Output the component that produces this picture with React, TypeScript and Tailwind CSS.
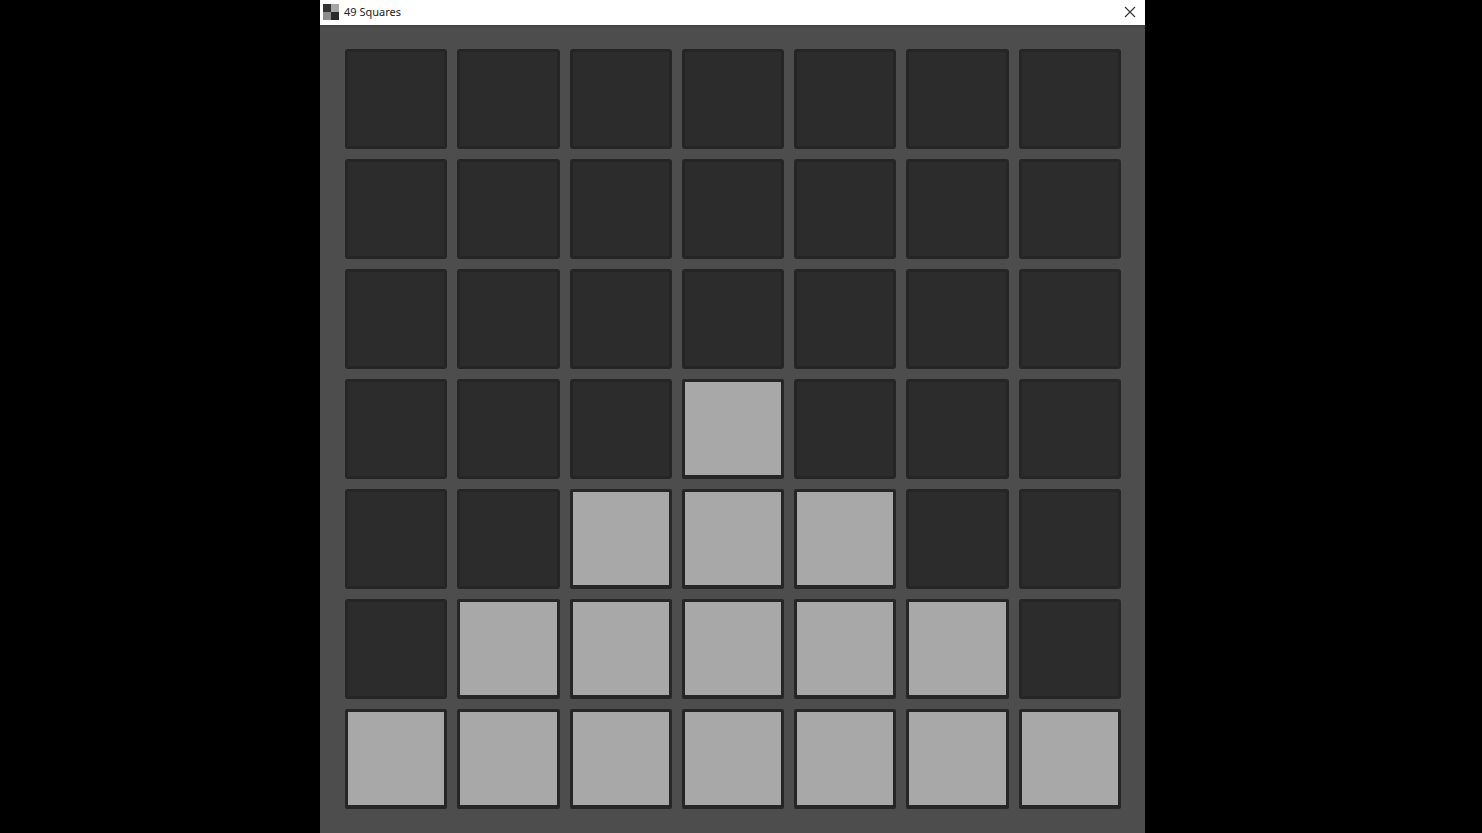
const litCells = new Set([
  24,
  30, 31, 32,
  36, 37, 38, 39, 40,
  42, 43, 44, 45, 46, 47, 48,
]);

function Cell({ lit }: { lit: boolean }) {
  return lit ? (
    <div className="rounded-[2px] border-[3px] border-b-[4px] border-[#262626] bg-[#a8a8a8]" />
  ) : (
    <div className="rounded-[3px] border-[3px] border-[#252525] bg-[#2c2c2c]" />
  );
}

function WindowIcon() {
  return (
    <div className="grid h-4 w-4 grid-cols-2 grid-rows-2">
      <div className="bg-[#333333]" />
      <div className="bg-[#a6a6a6]" />
      <div className="bg-[#8c8c8c]" />
      <div className="bg-[#2a2a2a]" />
    </div>
  );
}

export default function App() {
  return (
    <div className="flex h-[833px] w-[1482px] overflow-hidden bg-black pl-[320px] font-['Liberation_Sans',sans-serif]">
      <div className="flex h-full w-[825px] flex-col bg-[#4d4d4d]">
        <header className="flex h-[25px] shrink-0 items-center bg-white pb-[1px] pl-[3px] pr-[8px]">
          <WindowIcon />
          <span className="ml-[5px] font-['Noto_Sans',sans-serif] text-[11px] text-[#222222]">49 Squares</span>
          <svg className="ml-auto" width="14" height="14" viewBox="0 0 14 14" fill="none" stroke="#333333" strokeWidth="1.1">
            <path d="M2 2 L12 12 M12 2 L2 12" />
          </svg>
        </header>
        <main className="grid flex-1 grid-cols-7 grid-rows-[repeat(7,100px)] gap-[10px] border-t-[2px] border-t-[#454545] pl-[25px] pr-[24px] pt-[22px]">
          {Array.from({ length: 49 }, (_, i) => (
            <Cell key={i} lit={litCells.has(i)} />
          ))}
        </main>
      </div>
    </div>
  );
}
